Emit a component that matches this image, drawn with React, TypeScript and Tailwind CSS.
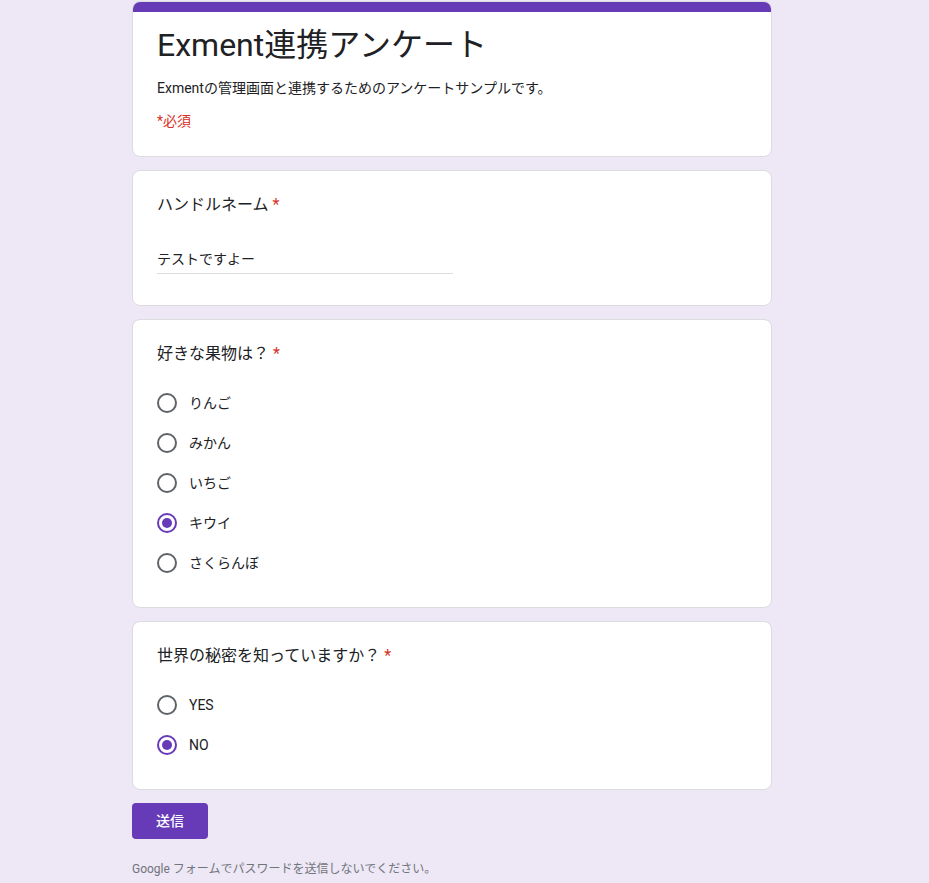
import { useState } from 'react';

type Question = {
	title: string;
	options: string[];
	selected: string;
};

const questions: Question[] = [
	{
		title: '好きな果物は？',
		options: ['りんご', 'みかん', 'いちご', 'キウイ', 'さくらんぼ'],
		selected: 'キウイ',
	},
	{
		title: '世界の秘密を知っていますか？',
		options: ['YES', 'NO'],
		selected: 'NO',
	},
];

function Radio({ checked }: { checked: boolean }) {
	return (
		<span
			className={`flex h-5 w-5 shrink-0 items-center justify-center rounded-full border-2 ${
				checked ? 'border-[#673ab7]' : 'border-[#5f6368]'
			}`}
		>
			{checked && <span className="h-[10px] w-[10px] rounded-full bg-[#673ab7]" />}
		</span>
	);
}

function Required() {
	return <span className="ml-1 text-[#d93025]">*</span>;
}

function ChoiceCard({ title, options, selected }: Question) {
	const [value, setValue] = useState(selected);

	return (
		<div className="rounded-lg border border-[#dadce0] bg-white px-6 pt-[22px] pb-6">
			<div className="text-base leading-6 text-[#202124]">
				{title}
				<Required />
			</div>
			<div className="mt-[17px] flex flex-col">
				{options.map((option) => (
					<button
						key={option}
						type="button"
						onClick={() => setValue(option)}
						className="flex h-10 items-center gap-3 text-left"
					>
						<Radio checked={value === option} />
						<span className="text-sm text-[#202124]">{option}</span>
					</button>
				))}
			</div>
		</div>
	);
}

export default function App() {
	return (
		<div
			className="min-h-screen bg-[#ede7f6] pt-[1px] pb-4"
			style={{ fontFamily: 'Roboto, "Noto Sans CJK JP", "Noto Sans", sans-serif' }}
		>
			<div className="ml-[132px] flex w-[640px] flex-col gap-[13px]">
				<div className="overflow-hidden rounded-lg border border-[#dadce0] bg-white">
					<div className="-mx-px -mt-px h-[11px] bg-[#673ab7]" />
					<div className="px-6 pt-[13px] pb-[25px]">
						<h1 className="text-[32px] leading-10 text-[#202124]">Exment連携アンケート</h1>
						<p className="mt-[13px] text-sm leading-5 text-[#202124]">
							Exmentの管理画面と連携するためのアンケートサンプルです。
						</p>
						<p className="mt-[13px] text-sm leading-5 text-[#d93025]">*必須</p>
					</div>
				</div>

				<div className="rounded-lg border border-[#dadce0] bg-white px-6 pt-[22px] pb-[31px]">
					<div className="text-base leading-6 text-[#202124]">
						ハンドルネーム
						<Required />
					</div>
					<div className="mt-[30px] w-[296px] border-b border-[#dadce0] pb-[2px] text-sm leading-6 text-[#202124]">
						テストですよー
					</div>
				</div>

				{questions.map((q) => (
					<ChoiceCard key={q.title} {...q} />
				))}

				<div>
					<button
						type="button"
						className="h-9 w-[76px] rounded bg-[#673ab7] text-sm font-medium text-white"
					>
						送信
					</button>
				</div>
				<p className="mt-[9px] text-xs leading-4 text-[#70757a]">
					Google フォームでパスワードを送信しないでください。
				</p>
			</div>
		</div>
	);
}
